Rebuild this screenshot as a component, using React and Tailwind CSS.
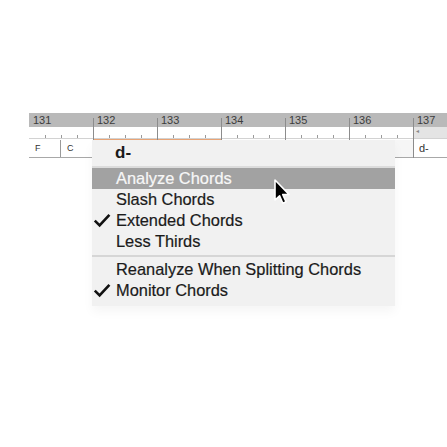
const bars = ["131", "132", "133", "134", "135", "136"];

const Check = () => (
  <svg width="18" height="15" viewBox="0 0 18 15" className="ml-[1px]">
    <path d="M1.8 7.6 L6.6 12.4 L16.4 1.8" fill="none" stroke="#111" strokeWidth="2.6" strokeLinejoin="miter" />
  </svg>
);

const Cursor = () => (
  <svg width="20" height="28" viewBox="0 0 20 28" className="absolute z-30 left-[273px] top-[179px]">
    <path d="M2 1 L2 21 L6.6 16.8 L9.8 24.2 L13 22.8 L9.8 15.6 L16 15.4 Z" fill="#000" stroke="#fff" strokeWidth="1.6" strokeLinejoin="round" />
  </svg>
);

const MenuItem = ({ label, checked, active }) => (
  <div className={`flex items-center h-[21px] ${active ? "bg-[#a2a2a2] text-[#f7f7f7]" : "text-[#1b1b1b]"}`}>
    <div className="w-[24px] flex items-center">{checked && <Check />}</div>
    <span className="text-[16.4px] leading-none [-webkit-text-stroke:0.2px_currentColor]">{label}</span>
  </div>
);

export default function App() {
  return (
    <div className="relative w-[447px] h-[447px] bg-white overflow-hidden font-['Liberation_Sans',Arial,sans-serif]">
      <div className="pt-[113px] pl-[29px]">
        {/* ruler */}
        <div className="flex">
          {bars.map((b, i) => (
            <div key={b} className="relative w-[64px]">
              {i > 0 && <div className="absolute z-10 left-0 top-[5px] bottom-[-3px] w-px bg-[#8c8c8c]" />}
              <div className="h-[14px] bg-[#b9b9b9] text-[11px] text-[#3c3c3c] leading-[14px] pl-[4px]">{b}</div>
              <div className="relative h-[12px] bg-white border-b border-[#d2d2d2]">
                <div className="absolute bottom-0 left-[16px] w-px h-[3px] bg-[#9a9a9a]" />
                <div className="absolute bottom-0 left-[32px] w-px h-[3px] bg-[#9a9a9a]" />
                <div className="absolute bottom-0 left-[48px] w-px h-[3px] bg-[#9a9a9a]" />
              </div>
            </div>
          ))}
          <div className="relative flex-1">
            <div className="absolute z-10 left-0 top-[5px] bottom-[-19px] w-px bg-[#8c8c8c]" />
            <div className="h-[14px] bg-[#b9b9b9] text-[11px] text-[#3c3c3c] leading-[14px] pl-[4px]">137</div>
            <div className="h-[12px] bg-[#e4e4e4] border-b border-[#d2d2d2] text-[6px] text-[#888] pl-[3px] leading-[8px]">◂</div>
          </div>
        </div>
        <div className="h-px ml-[64px] w-[129px] bg-[#e9a577]" />
        {/* track row */}
        <div className="flex h-[18px] border-b border-[#a8a8a8] text-[9px] text-[#333]">
          <div className="w-[32px] border-r border-[#9a9a9a] pl-[6px] leading-[17px]">F</div>
          <div className="w-[31px] pl-[6px] leading-[17px]">C</div>
          <div className="w-[322px] bg-[#f6f6f6]" />
          <div className="flex-1 pl-[5px] text-[11px] leading-[17px]">d-</div>
        </div>
      </div>

      {/* popup menu */}
      <div className="absolute z-20 left-[92px] top-[140px] w-[303px] bg-[#f1f1f1] shadow-[0_6px_10px_rgba(0,0,0,0.04)]">
        <div className="h-[26px] pl-[23px] flex items-center text-[17px] font-bold text-[#1a1a1a]">d-</div>
        <div className="h-[2px] bg-[#dcdcdc]" />
        <MenuItem label="Analyze Chords" active />
        <MenuItem label="Slash Chords" />
        <MenuItem label="Extended Chords" checked />
        <MenuItem label="Less Thirds" />
        <div className="h-[7px] flex items-center">
          <div className="h-[2px] w-full bg-[#d6d6d6]" />
        </div>
        <MenuItem label="Reanalyze When Splitting Chords" />
        <MenuItem label="Monitor Chords" checked />
        <div className="h-[5px]" />
      </div>

      <Cursor />
    </div>
  );
}
